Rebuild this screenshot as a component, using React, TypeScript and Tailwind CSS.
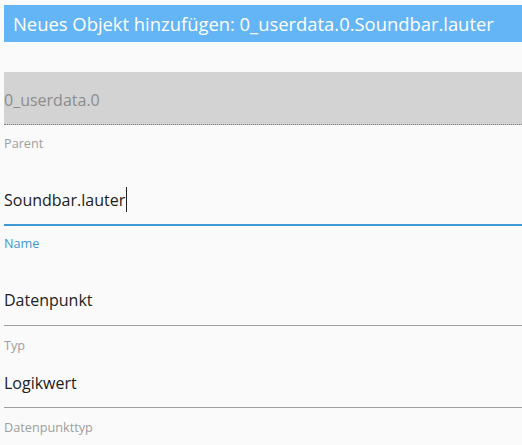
const font = { fontFamily: '"Open Sans", "Noto Sans", sans-serif' };

function Label({ text, active = false, className = '' }: { text: string; active?: boolean; className?: string }) {
  return (
    <div className={`h-[16px] text-[12.7px] leading-[16px] ${active ? 'text-[#3d98d3]' : 'text-[#9e9e9e]'} ${className}`}>
      {text}
    </div>
  );
}

export default function App() {
  return (
    <div className="min-h-screen bg-[#fafafa] pl-[4px] pt-[5px]" style={font}>
      <div className="flex h-[37px] items-center bg-[#64b5f6] pl-[9px] text-[18.4px] text-white whitespace-nowrap overflow-hidden">
        Neues Objekt hinzufügen: 0_userdata.0.Soundbar.lauter
      </div>

      {/* Parent (disabled) */}
      <div className="mt-[30px] h-[53px] border-b border-dotted border-[#777] bg-[#d3d3d3] pt-[16px] text-[16px] leading-[24px] text-[#8c8c8c]">
        0_userdata.0
      </div>
      <Label text="Parent" className="mt-[10px]" />

      {/* Name (focused) */}
      <div className="mt-[37px] flex border-b-2 border-[#3d98d3] pb-[12px] text-[16px] leading-[24px] text-[#212121]">
        <span>Soundbar.lauter</span>
        <span className="ml-[1px] mt-[-1px] h-[25px] w-px bg-[#212121]" />
      </div>
      <Label text="Name" active className="mt-[9px]" />

      {/* Typ */}
      <div className="mt-[37px] border-b border-[#9e9e9e] pb-[13px] text-[16px] leading-[24px] text-[#212121]">
        Datenpunkt
      </div>
      <Label text="Typ" className="mt-[11px]" />

      {/* Datenpunkttyp */}
      <div className="mt-[18px] border-b border-[#9e9e9e] pb-[12px] text-[16px] leading-[24px] text-[#212121]">
        Logikwert
      </div>
      <Label text="Datenpunkttyp" className="mt-[11px]" />
    </div>
  );
}
